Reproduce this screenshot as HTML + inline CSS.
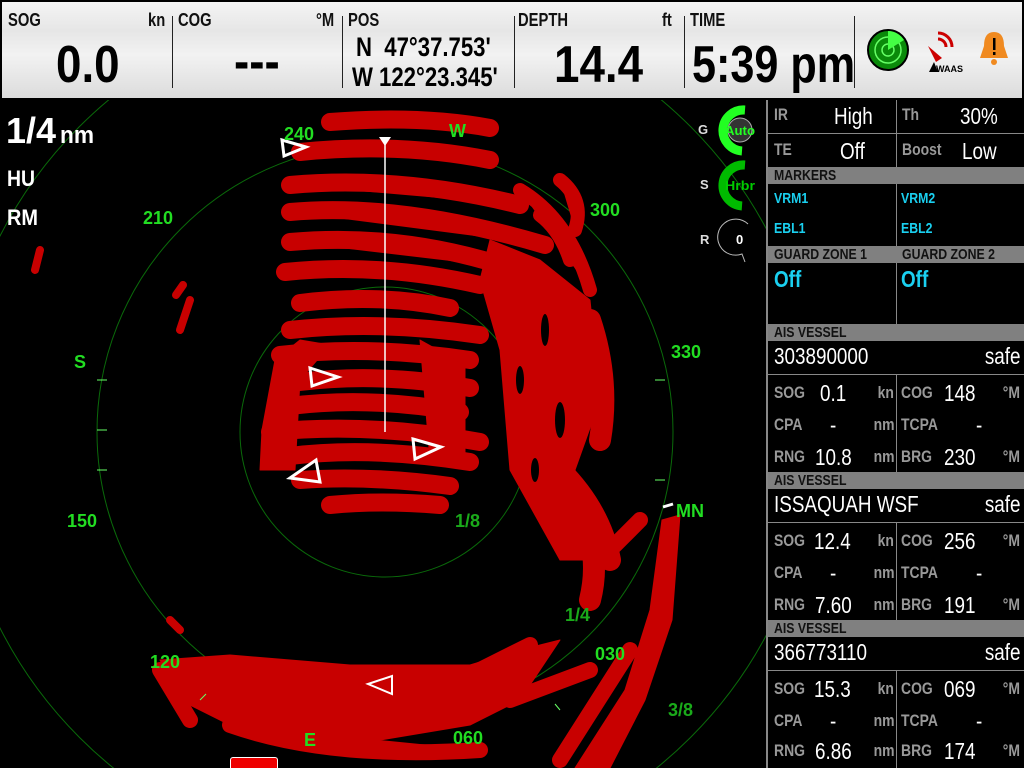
<!DOCTYPE html>
<html><head><meta charset="utf-8"><style>
*{margin:0;padding:0;box-sizing:border-box}
html,body{width:1024px;height:768px;overflow:hidden}
body{background:#000;font-family:"Liberation Sans",sans-serif;font-weight:bold;position:relative}
.a{position:absolute;white-space:nowrap;transform:scaleX(.82);transform-origin:0 0;line-height:1.1}
.r{position:absolute;white-space:nowrap;transform:scaleX(.82);transform-origin:100% 0;line-height:1.1}
.p{position:absolute}
#top{position:absolute;left:0;top:0;width:1024px;height:100px;border:2px solid #000;background:linear-gradient(180deg,#f4f4f4 0%,#e6e6e6 30%,#f2f2f2 55%,#dcdcdc 100%)}
.dv{position:absolute;top:14px;width:1px;height:72px;background:#222}
.lb{font-size:18px;color:#111}
.big{font-size:52px;color:#000;transform:scaleX(.88)}
.pl{font-size:17px;color:#999}
.pv{font-size:23px;color:#fff;font-weight:normal}
.hd{position:absolute;left:768px;width:256px;height:17px;background:#808080;color:#111;font-size:15px;line-height:17px;overflow:hidden}
.hd span{position:absolute;top:0;transform:scaleX(.82);transform-origin:0 0;white-space:nowrap}
.cy{color:#1ad0f0}
.hl{position:absolute;background:#888;height:1px}
.vl{position:absolute;background:#888;width:1px}
.g{fill:#22dd22;font-family:"Liberation Sans",sans-serif;font-weight:bold;font-size:18px}
</style></head><body>
<div id="top">
<div class="a lb" style="left:6px;top:9px">SOG</div><div class="a lb" style="left:146px;top:9px">kn</div>
<div class="a big" style="left:54px;top:35px">0.0</div>
<div class="dv" style="left:170px"></div>
<div class="a lb" style="left:176px;top:9px">COG</div><div class="a lb" style="left:314px;top:9px">°M</div>
<div class="a big" style="left:232px;top:32px">---</div>
<div class="dv" style="left:340px"></div>
<div class="a lb" style="left:346px;top:9px">POS</div>
<div class="a" style="left:354px;top:31px;font-size:27px;color:#000">N&nbsp; 47°37.753'</div>
<div class="a" style="left:350px;top:61px;font-size:27px;color:#000">W 122°23.345'</div>
<div class="dv" style="left:512px"></div>
<div class="a lb" style="left:516px;top:9px">DEPTH</div><div class="a lb" style="left:660px;top:9px">ft</div>
<div class="a big" style="left:552px;top:35px">14.4</div>
<div class="dv" style="left:682px"></div>
<div class="a lb" style="left:688px;top:9px">TIME</div>
<div class="a big" style="left:690px;top:35px;transform:scaleX(.83)">5:39 pm</div>
<div class="dv" style="left:852px"></div>
<svg class="p" style="left:864px;top:26px" width="150" height="50">
<circle cx="22" cy="22" r="20" fill="#0a8a0a" stroke="#000" stroke-width="2"/>
<circle cx="22" cy="22" r="13" fill="none" stroke="#6f6" stroke-width="1.5"/><circle cx="22" cy="22" r="6" fill="none" stroke="#6f6" stroke-width="1.5"/>
<path d="M22 22 L22 3 A19 19 0 0 1 38 12Z" fill="#4f4"/>
<path d="M72 5 a14 14 0 0 1 14 14 M72 11 a8 8 0 0 1 8 8" stroke="#c00" stroke-width="3" fill="none"/>
<path d="M62 18 L76 30 L70 34Z" fill="#c00"/><path d="M63 44 L68 34 L72 44Z" fill="#000"/>
<text x="70" y="44" font-size="9" font-family="Liberation Sans" font-weight="bold">WAAS</text>
<path d="M128 4 q-10 0 -10 14 l-4 12 h28 l-4 -12 q0 -14 -10 -14z" fill="#f08a20"/><circle cx="128" cy="34" r="3" fill="#f08a20"/>
<rect x="127" y="10" width="2.5" height="12" fill="#000"/><rect x="127" y="24" width="2.5" height="3" fill="#000"/>
</svg>
</div>

<svg class="p" style="left:0;top:100px" width="766" height="668" viewBox="0 100 766 668">
<g fill="none" stroke="#0a6a0a" stroke-width="1">
<circle cx="385" cy="432" r="145"/><circle cx="385" cy="432" r="288"/><circle cx="385" cy="432" r="432"/></g>
<g fill="#c80000" stroke="#c80000" stroke-linecap="round" stroke-linejoin="round">
<g stroke-width="18">
<path d="M330 122 Q420 115 490 128"/><path d="M300 152 Q400 142 490 160"/><path d="M290 185 Q400 175 520 205"/>
<path d="M290 212 Q400 202 545 245"/><path d="M290 242 Q400 232 510 268"/><path d="M285 272 Q380 262 480 285"/>
<path d="M300 303 Q380 293 450 308"/><path d="M290 330 Q380 320 480 335"/><path d="M280 355 Q370 345 470 360"/>
<path d="M300 382 Q380 372 470 388"/><path d="M290 406 Q370 396 460 412"/><path d="M270 432 Q370 422 480 442"/>
<path d="M290 456 Q370 446 470 462"/><path d="M300 480 Q370 475 450 486"/><path d="M330 505 Q380 500 440 505"/>
</g>
<path d="M262 430 L275 360 L300 340 L330 345 L300 380 L295 470 L260 470Z"/>
<path d="M420 340 L465 365 L465 460 L430 460Z"/>
<path d="M490 240 L540 260 L590 300 L600 400 L575 470 L590 560 L560 560 L510 470 L500 350 L480 280Z"/>
<g stroke-width="14"><path d="M520 190 Q570 220 590 290"/><path d="M560 180 Q585 200 575 230"/><path d="M540 215 Q560 230 570 260"/></g>
<g stroke-width="22"><path d="M590 320 Q610 380 600 440"/><path d="M560 470 Q600 510 610 560"/><path d="M585 520 Q600 560 590 600"/></g>
<path d="M662 520 L680 515 L672 620 L645 700 L610 768 L575 768 L625 690 L650 610Z"/>
<g stroke-width="16"><path d="M630 650 L560 760"/><path d="M600 560 L640 520"/></g>
<path d="M160 660 L230 655 L350 665 L470 665 L520 650 L560 640 L520 700 L470 725 L380 740 L300 745 L230 725 L180 700Z"/>
<g stroke-width="16"><path d="M230 725 Q330 760 480 750"/><path d="M160 670 L190 720"/><path d="M460 680 L530 645"/><path d="M510 700 L590 670"/></g>
<g stroke-width="8"><path d="M40 250 L35 270"/><path d="M183 285 L176 295"/><path d="M170 620 L180 630"/><path d="M440 720 L480 715"/><path d="M190 300 L180 330"/></g>
</g>
<g fill="#000"><ellipse cx="520" cy="380" rx="4" ry="14"/><ellipse cx="545" cy="330" rx="4" ry="16"/><ellipse cx="560" cy="420" rx="5" ry="18"/><ellipse cx="535" cy="470" rx="4" ry="12"/></g>
<g stroke="#6f6" stroke-width="1"><path d="M97 380 h10 M97 430 h10 M97 470 h10 M665 380 h-10 M665 480 h-10 M200 700 l6 -6 M560 710 l-5 -6"/></g>
<line x1="385" y1="140" x2="385" y2="432" stroke="#fff" stroke-width="1.5"/>
<path d="M379 137 h12 l-6 9z" fill="#fff"/>
<g fill="none" stroke="#fff" stroke-width="3">
<path d="M282 140 L306 147 L284 156Z"/><path d="M310 368 L338 377 L312 386Z"/><path d="M413 439 L441 447 L415 459Z"/>
<path d="M290 478 L316 460 L320 482Z"/><path d="M368 684 L392 676 L392 694Z" stroke-width="2"/></g>
<path d="M663 507 l10 -3" stroke="#fff" stroke-width="3"/>
<text class="g" x="284" y="140">240</text><text class="g" x="449" y="137">W</text>
<text class="g" x="143" y="224">210</text><text class="g" x="590" y="216">300</text>
<text class="g" x="74" y="368">S</text><text class="g" x="671" y="358">330</text>
<text class="g" x="67" y="527">150</text><text class="g" x="676" y="517">MN</text>
<text class="g" x="455" y="527" style="fill:#1aaa1a">1/8</text>
<text class="g" x="565" y="621" style="fill:#1aaa1a">1/4</text>
<text class="g" x="595" y="660">030</text><text class="g" x="150" y="668">120</text>
<text class="g" x="453" y="744">060</text><text class="g" x="304" y="746">E</text>
<text class="g" x="668" y="716" style="fill:#1aaa1a">3/8</text>
<text x="6" y="143" fill="#fff" font-size="36" font-family="Liberation Sans" font-weight="bold" textLength="50" lengthAdjust="spacingAndGlyphs">1/4</text>
<text x="60" y="143" fill="#fff" font-size="24" font-family="Liberation Sans" font-weight="bold" textLength="34" lengthAdjust="spacingAndGlyphs">nm</text>
<text x="7" y="186" fill="#fff" font-size="22" font-family="Liberation Sans" font-weight="bold" textLength="28" lengthAdjust="spacingAndGlyphs">HU</text>
<text x="7" y="225" fill="#fff" font-size="22" font-family="Liberation Sans" font-weight="bold" textLength="31" lengthAdjust="spacingAndGlyphs">RM</text>
<g font-family="Liberation Sans" font-weight="bold" font-size="13">
<text x="698" y="134" fill="#ddd">G</text><text x="700" y="189" fill="#ddd">S</text><text x="700" y="244" fill="#ddd">R</text>
<path d="M745 110 A20 20 0 1 0 742 151" stroke="#2f2" stroke-width="9" fill="none"/>
<path d="M745 165 A20 20 0 1 0 742 206" stroke="#0b0" stroke-width="9" fill="none"/>
<path d="M748 224 A18 18 0 1 0 742 254 L745 262" stroke="#bbb" stroke-width="1" fill="none"/>
<circle cx="740" cy="130" r="12" fill="#333" stroke="#aaa"/>
<text x="725" y="135" fill="#2f2" textLength="30" lengthAdjust="spacingAndGlyphs">Auto</text><text x="725" y="190" fill="#0c0" textLength="30" lengthAdjust="spacingAndGlyphs">Hrbr</text><text x="736" y="244" fill="#fff">0</text></g>
</svg>
<div class="p" style="top:757px;left:230px;width:48px;height:11px;background:#e00;border:1px solid #fff;border-bottom:0;border-radius:3px 3px 0 0"></div>

<div class="p" style="left:766px;top:100px;width:2px;height:668px;background:#888"></div>
<div class="vl" style="left:896px;top:100px;height:67px"></div>
<div class="hl" style="left:768px;top:133px;width:256px"></div>
<div class="a pl" style="left:774px;top:106px">IR</div><div class="a pv" style="left:834px;top:104px">High</div>
<div class="a pl" style="left:902px;top:106px">Th</div><div class="a pv" style="left:960px;top:104px">30%</div>
<div class="a pl" style="left:774px;top:141px">TE</div><div class="a pv" style="left:840px;top:139px">Off</div>
<div class="a pl" style="left:902px;top:141px">Boost</div><div class="a pv" style="left:962px;top:139px">Low</div>
<div class="hd" style="top:167px"><span style="left:6px">MARKERS</span></div>
<div class="vl" style="left:896px;top:184px;height:62px"></div>
<div class="a cy" style="left:774px;top:191px;font-size:15px">VRM1</div><div class="a cy" style="left:901px;top:191px;font-size:15px">VRM2</div>
<div class="a cy" style="left:774px;top:221px;font-size:15px">EBL1</div><div class="a cy" style="left:901px;top:221px;font-size:15px">EBL2</div>
<div class="hd" style="top:246px"><span style="left:6px">GUARD ZONE 1</span><span style="left:134px">GUARD ZONE 2</span></div>
<div class="vl" style="left:896px;top:263px;height:61px"></div>
<div class="a cy" style="left:774px;top:267px;font-size:23px">Off</div><div class="a cy" style="left:901px;top:267px;font-size:23px">Off</div>

<div class="hd" style="top:324px"><span style="left:6px">AIS VESSEL</span></div>
<div class="a pv" style="left:774px;top:344px">303890000</div><div class="r pv" style="right:4px;top:344px">safe</div>
<div class="hl" style="left:768px;top:374px;width:256px"></div>
<div class="vl" style="left:896px;top:375px;height:97px"></div>
<div class="a pl" style="left:774px;top:384px">SOG</div><div class="a pv" style="left:820px;top:381px">0.1</div><div class="r pl" style="right:130px;top:384px">kn</div>
<div class="a pl" style="left:901px;top:384px">COG</div><div class="a pv" style="left:944px;top:381px">148</div><div class="r pl" style="right:4px;top:384px">°M</div>
<div class="a pl" style="left:774px;top:416px">CPA</div><div class="a pv" style="left:830px;top:413px">-</div><div class="r pl" style="right:130px;top:416px">nm</div>
<div class="a pl" style="left:901px;top:416px">TCPA</div><div class="a pv" style="left:976px;top:413px">-</div>
<div class="a pl" style="left:774px;top:448px">RNG</div><div class="a pv" style="left:815px;top:445px">10.8</div><div class="r pl" style="right:130px;top:448px">nm</div>
<div class="a pl" style="left:901px;top:448px">BRG</div><div class="a pv" style="left:944px;top:445px">230</div><div class="r pl" style="right:4px;top:448px">°M</div>

<div class="hd" style="top:472px"><span style="left:6px">AIS VESSEL</span></div>
<div class="a pv" style="left:774px;top:492px">ISSAQUAH WSF</div><div class="r pv" style="right:4px;top:492px">safe</div>
<div class="hl" style="left:768px;top:522px;width:256px"></div>
<div class="vl" style="left:896px;top:523px;height:97px"></div>
<div class="a pl" style="left:774px;top:532px">SOG</div><div class="a pv" style="left:814px;top:529px">12.4</div><div class="r pl" style="right:130px;top:532px">kn</div>
<div class="a pl" style="left:901px;top:532px">COG</div><div class="a pv" style="left:944px;top:529px">256</div><div class="r pl" style="right:4px;top:532px">°M</div>
<div class="a pl" style="left:774px;top:564px">CPA</div><div class="a pv" style="left:830px;top:561px">-</div><div class="r pl" style="right:130px;top:564px">nm</div>
<div class="a pl" style="left:901px;top:564px">TCPA</div><div class="a pv" style="left:976px;top:561px">-</div>
<div class="a pl" style="left:774px;top:596px">RNG</div><div class="a pv" style="left:815px;top:593px">7.60</div><div class="r pl" style="right:130px;top:596px">nm</div>
<div class="a pl" style="left:901px;top:596px">BRG</div><div class="a pv" style="left:944px;top:593px">191</div><div class="r pl" style="right:4px;top:596px">°M</div>

<div class="hd" style="top:620px"><span style="left:6px">AIS VESSEL</span></div>
<div class="a pv" style="left:774px;top:640px">366773110</div><div class="r pv" style="right:4px;top:640px">safe</div>
<div class="hl" style="left:768px;top:670px;width:256px"></div>
<div class="vl" style="left:896px;top:671px;height:97px"></div>
<div class="a pl" style="left:774px;top:680px">SOG</div><div class="a pv" style="left:814px;top:677px">15.3</div><div class="r pl" style="right:130px;top:680px">kn</div>
<div class="a pl" style="left:901px;top:680px">COG</div><div class="a pv" style="left:944px;top:677px">069</div><div class="r pl" style="right:4px;top:680px">°M</div>
<div class="a pl" style="left:774px;top:712px">CPA</div><div class="a pv" style="left:830px;top:709px">-</div><div class="r pl" style="right:130px;top:712px">nm</div>
<div class="a pl" style="left:901px;top:712px">TCPA</div><div class="a pv" style="left:976px;top:709px">-</div>
<div class="a pl" style="left:774px;top:742px">RNG</div><div class="a pv" style="left:815px;top:739px">6.86</div><div class="r pl" style="right:130px;top:742px">nm</div>
<div class="a pl" style="left:901px;top:742px">BRG</div><div class="a pv" style="left:944px;top:739px">174</div><div class="r pl" style="right:4px;top:742px">°M</div>
</body></html>
